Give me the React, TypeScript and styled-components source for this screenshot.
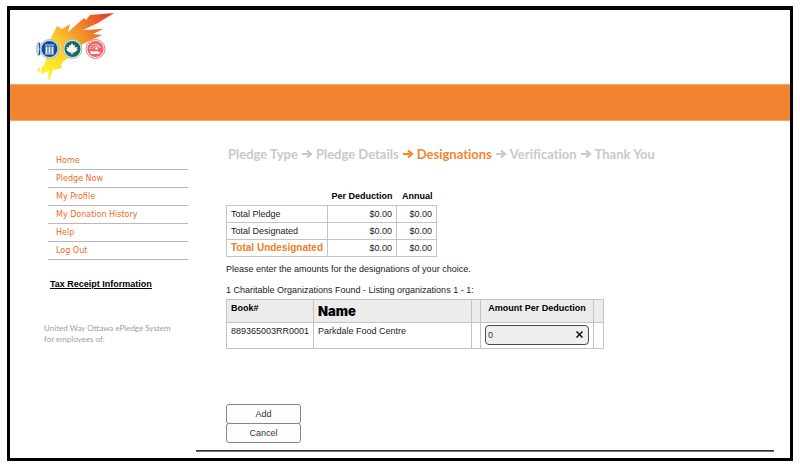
import React, { useState } from "react";
import styled, { createGlobalStyle } from "styled-components";

const GlobalStyle = createGlobalStyle`
  * { box-sizing: border-box; }
  body {
    margin: 0;
    background: #fff;
    color: #222;
    font-family: "Liberation Sans", Arial, sans-serif;
    font-size: 9px;
    line-height: 12px;
  }
`;

const Frame = styled.div`
  margin: 6px 7px;
  border: 3px solid #000;
  border-top-width: 4px;
`;

const Header = styled.header`
  height: 74px;
  padding-left: 25px;
`;

const Logo = styled.svg`
  display: block;
`;

const Banner = styled.div`
  height: 37px;
  background: #f28432;
  border: 1px solid #efa765;
  border-width: 1px 0;
`;

const Columns = styled.div`
  display: flex;
  align-items: flex-start;
`;

const Sidebar = styled.aside`
  width: 186px;
  flex: none;
  padding: 31px 8px 0 34px;
`;

const Menu = styled.nav`
  margin: 0 0 0 4px;
`;

const MenuLink = styled.a`
  display: block;
  height: 18px;
  padding: 3px 0 0 8px;
  border-bottom: 1px solid #b9b9b9;
  color: #ef6a24;
  font-family: "DejaVu Sans", sans-serif;
  font-size: 8px;
  text-decoration: none;
`;

const ReceiptLink = styled.a`
  display: block;
  margin: 18px 0 0 6px;
  color: #000;
  font-weight: bold;
  text-decoration: underline;
`;

const Notice = styled.p`
  margin: 33px 0 0;
  color: #a0a0a0;
  font-family: Lato, sans-serif;
  font-size: 8px;
  line-height: 11px;
  white-space: nowrap;
`;

const Main = styled.main`
  flex: 1;
  min-width: 0;
  padding: 24px 16px 0 0;
`;

const Content = styled.div`
  padding-left: 30px;
`;

const Steps = styled.ol`
  display: flex;
  gap: 3px;
  margin: 0 0 25px;
  padding: 0 0 0 2px;
  list-style: none;
  font-family: Lato, sans-serif;
  font-size: 13px;
  font-weight: bold;
  font-variant-ligatures: none;
  line-height: 18px;
  white-space: nowrap;
`;

const Step = styled.li<{ $active?: boolean }>`
  display: flex;
  align-items: center;
  gap: 3px;
  color: ${(p) => (p.$active ? "#f48531" : "#c9c9c9")};
`;

const Table = styled.table`
  border-collapse: collapse;
  line-height: 12px;
`;

const SummaryTable = styled(Table)`
  width: 210px;
  table-layout: fixed;
`;

const SummaryHead = styled.th`
  height: 17px;
  padding: 0 4px;
  color: #000;
  text-align: right;
  white-space: nowrap;
`;

const SummaryLabel = styled.th<{ $strong?: boolean }>`
  height: 17px;
  padding: 0 4px;
  border: 1px solid #c4c4c4;
  text-align: left;
  white-space: nowrap;
  color: ${(p) => (p.$strong ? "#ee7d2b" : "inherit")};
  font-size: ${(p) => (p.$strong ? "10px" : "9px")};
  font-weight: ${(p) => (p.$strong ? "bold" : "normal")};
`;

const SummaryValue = styled.td`
  padding: 0 4px;
  border: 1px solid #c4c4c4;
  text-align: right;
`;

const Col = styled.col<{ $width: number }>`
  width: ${(p) => p.$width}px;
`;

const Text = styled.p`
  margin: 6px 0 9px;
`;

const ResultText = styled.p`
  margin: 0 0 3px;
`;

const ResultTable = styled(Table)`
  width: 377px;
  table-layout: fixed;
`;

const ResultHead = styled.th<{ $large?: boolean; $center?: boolean }>`
  height: 23px;
  padding: ${(p) => (p.$large ? "5px" : "2px")} 4px 0;
  border: 1px solid #c4c4c4;
  background: #ececec;
  color: #000;
  font-family: ${(p) => (p.$large ? "Inter, sans-serif" : "inherit")};
  font-size: ${(p) => (p.$large ? "13px" : "9px")};
  font-weight: ${(p) => (p.$large ? 900 : "bold")};
  text-align: ${(p) => (p.$center ? "center" : "left")};
  vertical-align: top;
`;

const ResultCell = styled.td`
  height: 26px;
  padding: 2px 4px;
  border: 1px solid #c4c4c4;
  vertical-align: top;
  white-space: nowrap;
`;

const AmountField = styled.div`
  display: flex;
  align-items: center;
  height: 20px;
  padding: 0 4px 0 2px;
  border: 1px solid #4c4c4c;
  border-radius: 4px;
  background: #efefef;
`;

const AmountInput = styled.input`
  flex: 1;
  min-width: 0;
  padding: 0;
  border: 0;
  outline: 0;
  background: transparent;
  color: #333;
  font: inherit;
`;

const ClearButton = styled.button`
  display: flex;
  padding: 0;
  border: 0;
  background: transparent;
`;

const Actions = styled.div`
  display: flex;
  flex-direction: column;
  width: 75px;
  margin: 55px 0 7px;
`;

const ActionButton = styled.button`
  height: 20px;
  padding: 0;
  border: 1px solid #858585;
  border-radius: 3px;
  background: #fdfffc;
  color: #333;
  font: inherit;

  & + & { margin-top: -1px; }
`;

const Rule = styled.hr`
  height: 2px;
  margin: 0 0 6px;
  border: 0;
  border-top: 1px solid #333;
  background: #707070;
`;

const menu = ["Home", "Pledge Now", "My Profile", "My Donation History", "Help", "Log Out"];
const steps = ["Pledge Type", "Pledge Details", "Designations", "Verification", "Thank You"];
const totals = ["Total Pledge", "Total Designated", "Total Undesignated"];

function Arrow() {
  return (
    <svg width="12" height="10" viewBox="0 0 12 10" fill="none" stroke="currentColor" strokeWidth="2.200" aria-hidden="true">
      <path d="M1 5h9M6 1.500 10 5 6 8.500" />
    </svg>
  );
}

function CampaignLogo() {
  return (
    <Logo width="80" height="72" viewBox="35 10 80 72" role="img" aria-label="Workplace charitable campaign">
      <defs>
        <linearGradient id="flame" x1="42" y1="68" x2="111" y2="14" gradientUnits="userSpaceOnUse">
          <stop offset="0" stopColor="#fff12b" />
          <stop offset=".3" stopColor="#fdd22c" />
          <stop offset=".55" stopColor="#f39a2b" />
          <stop offset=".78" stopColor="#ec692a" />
          <stop offset="1" stopColor="#e9352c" />
        </linearGradient>
      </defs>
      <path fill="url(#flame)" d="M49 42 57 26l5 3 8-5-2 8 16-14 2 2 4-5 24-2-16 10-15 7 20-1-10 5 9 1-19 9-5 6-8 7-5 3-4 4 1 4-9 2-2 5-1 5-2-1 1-8-8 3 4-11z" />
      <path fill="#ffea25" d="m37 72 2-6 1 5zM41 73l1-6 4-3-1 6z" />
      <path d="M39 42a12 12 0 0 0 0 14" fill="none" stroke="#b3c5de" strokeWidth="2" />
      <path d="M39.500 43v12" stroke="#174f98" strokeWidth="1.500" />
      <circle cx="49.500" cy="49" r="9.500" fill="#d1e0ee" stroke="#a9bdd5" />
      <circle cx="49.500" cy="49" r="8" fill="#0f4d99" />
      <path d="M45 45h9M45 54h9" stroke="#d6e6f4" strokeWidth="1" />
      <path d="M46.500 46.500v7M49.500 46.500v7M52.500 46.500v7" stroke="#e8f1f8" strokeWidth="2" />
      <circle cx="72.500" cy="49" r="9.500" fill="#d9e9e3" stroke="#a9c6bf" />
      <circle cx="72.500" cy="49" r="8" fill="#23675c" />
      <path fill="#fff" d="m72 43 1.500 2.500 1.500-.5-.4 2.500 2.900-.5-.8 2 1.100.8-3.800 3-1.500-.2.200 2h-1.300l.1-2-1.600.2-3.800-3 1.200-.8-.8-2 2.800.5-.3-2.500 1.500.5z" />
      <circle cx="95.500" cy="49" r="9.500" fill="#fff0f0" stroke="#ef7a7d" />
      <circle cx="95.500" cy="49" r="8" fill="#ee6268" />
      <path d="M90 49c0-5 8-7 11-1M92.500 49c1-3 5-4 7-1" fill="none" stroke="#ffd8d8" />
      <path d="m90 51 4 .500 3-.500 4 2-3 1h-7z" fill="#fff" />
      <circle cx="96.500" cy="48.500" r="1.200" fill="#fff" />
    </Logo>
  );
}

export default function App() {
  const [amount, setAmount] = useState("0");

  return (
    <>
      <GlobalStyle />
      <Frame>
        <Header><CampaignLogo /></Header>
        <Banner />
        <Columns>
          <Sidebar>
            <Menu aria-label="Main">
              {menu.map((item) => <MenuLink href="#" key={item}>{item}</MenuLink>)}
            </Menu>
            <ReceiptLink href="#">Tax Receipt Information</ReceiptLink>
            <Notice>United Way Ottawa ePledge System<br />for employees of:</Notice>
          </Sidebar>
          <Main>
            <Content>
              <Steps>
                {steps.map((step, index) => (
                  <Step key={step} $active={index === 2} aria-current={index === 2 ? "step" : undefined}>
                    {index > 0 && <Arrow />}
                    {step}
                  </Step>
                ))}
              </Steps>
              <SummaryTable>
                <colgroup><Col $width={101} /><Col $width={69} /><Col $width={40} /></colgroup>
                <thead>
                  <tr><td /><SummaryHead scope="col">Per Deduction</SummaryHead><SummaryHead scope="col">Annual</SummaryHead></tr>
                </thead>
                <tbody>
                  {totals.map((label, index) => (
                    <tr key={label}>
                      <SummaryLabel scope="row" $strong={index === 2}>{label}</SummaryLabel>
                      <SummaryValue>$0.00</SummaryValue>
                      <SummaryValue>$0.00</SummaryValue>
                    </tr>
                  ))}
                </tbody>
              </SummaryTable>
              <Text>Please enter the amounts for the designations of your choice.</Text>
              <ResultText>1 Charitable Organizations Found - Listing organizations 1 - 1:</ResultText>
              <ResultTable>
                <colgroup>
                  <Col $width={87} /><Col $width={158} /><Col $width={9} /><Col $width={113} /><Col $width={10} />
                </colgroup>
                <thead>
                  <tr>
                    <ResultHead scope="col">Book#</ResultHead>
                    <ResultHead scope="col" $large>Name</ResultHead>
                    <ResultHead />
                    <ResultHead scope="col" $center id="amount-label">Amount Per Deduction</ResultHead>
                    <ResultHead />
                  </tr>
                </thead>
                <tbody>
                  <tr>
                    <ResultCell>889365003RR0001</ResultCell>
                    <ResultCell>Parkdale Food Centre</ResultCell>
                    <ResultCell />
                    <ResultCell>
                      <AmountField>
                        <AmountInput aria-labelledby="amount-label" value={amount} onChange={(e) => setAmount(e.target.value)} />
                        <ClearButton type="button" aria-label="Clear amount" onClick={() => setAmount("")}>
                          <svg width="9" height="9" viewBox="0 0 9 9" stroke="#111" strokeWidth="1.500"><path d="m1.500 1.500 6 6m0-6-6 6" /></svg>
                        </ClearButton>
                      </AmountField>
                    </ResultCell>
                    <ResultCell />
                  </tr>
                </tbody>
              </ResultTable>
              <Actions>
                <ActionButton type="button">Add</ActionButton>
                <ActionButton type="button">Cancel</ActionButton>
              </Actions>
            </Content>
            <Rule />
          </Main>
        </Columns>
      </Frame>
    </>
  );
}
